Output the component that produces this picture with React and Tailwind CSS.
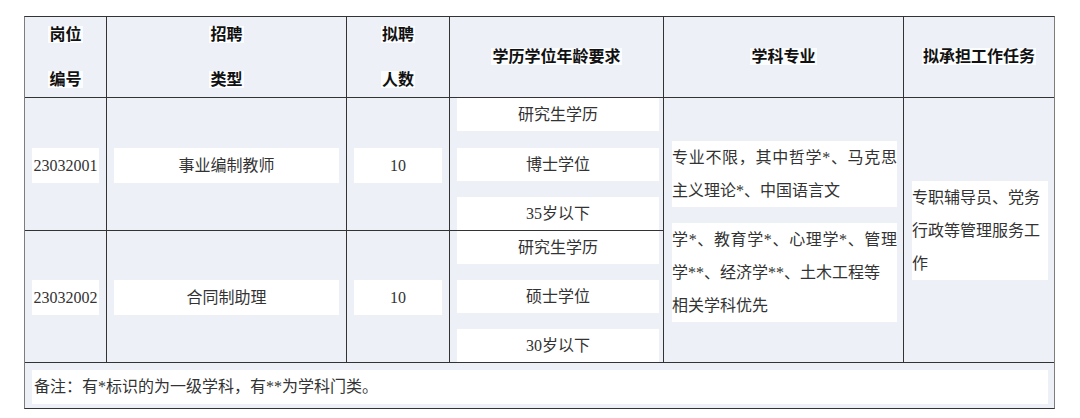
import React from "react";

const cell = "bg-[#edf1f7]";

function HeadCell({ lines }) {
  return (
    <div className={`${cell} flex flex-col items-center justify-center gap-[15px]`}>
      {lines.map((t) => (
        <span key={t} className="leading-[30px] font-bold text-[#111]">
          <span className="bg-[#fbfcfe] px-[1px]">{t}</span>
        </span>
      ))}
    </div>
  );
}

function BoxCell({ text }) {
  return (
    <div className={`${cell} flex items-center px-[7px] pt-[2px]`}>
      <div className="w-full bg-white text-center leading-[35px]">{text}</div>
    </div>
  );
}

function EduCell({ items }) {
  return (
    <div className={`${cell} flex flex-col justify-between pl-[7px] pr-[4px]`}>
      {items.map((t) => (
        <div key={t} className="h-[33px] bg-white text-center leading-[33px]">
          {t}
        </div>
      ))}
    </div>
  );
}

export default function App() {
  return (
    <div className="w-[1080px] h-[418px] bg-white pt-[16px] pl-[24px] font-['Liberation_Serif','Noto_Sans_CJK_SC',serif] text-[16px] text-[#333]">
      <div className="w-[1031px] border border-[#333] border-x-[#7d7d7d]">
        <div className="grid grid-cols-[81px_239px_102px_213px_239px_150px] grid-rows-[80px_132px_131px_45px] gap-px bg-[#333]">
          {/* header */}
          <HeadCell lines={["岗位", "编号"]} />
          <HeadCell lines={["招聘", "类型"]} />
          <HeadCell lines={["拟聘", "人数"]} />
          <HeadCell lines={["学历学位年龄要求"]} />
          <HeadCell lines={["学科专业"]} />
          <HeadCell lines={["拟承担工作任务"]} />

          {/* row 1 */}
          <BoxCell text="23032001" />
          <BoxCell text="事业编制教师" />
          <BoxCell text="10" />
          <EduCell items={["研究生学历", "博士学位", "35岁以下"]} />

          {/* merged: major */}
          <div className={`${cell} row-span-2 flex flex-col justify-center gap-[16px] pl-[8px] pr-[6px] pt-[2px]`}>
            <div className="bg-white leading-[33px]">
              <div className="text-justify [text-align-last:justify]">专业不限，其中哲学*、马克思</div>
              <div>主义理论*、中国语言文</div>
            </div>
            <div className="bg-white leading-[33px]">
              <div className="text-justify [text-align-last:justify]">学*、教育学*、心理学*、管理</div>
              <div>学**、经济学**、土木工程等</div>
              <div>相关学科优先</div>
            </div>
          </div>

          {/* merged: task */}
          <div className={`${cell} row-span-2 flex items-center pl-[8px] pr-[6px]`}>
            <div className="w-full bg-white leading-[33px]">
              专职辅导员、党务行政等管理服务工作
            </div>
          </div>

          {/* row 2 */}
          <BoxCell text="23032002" />
          <BoxCell text="合同制助理" />
          <BoxCell text="10" />
          <EduCell items={["研究生学历", "硕士学位", "30岁以下"]} />

          {/* note */}
          <div className={`${cell} col-span-6 pl-[7px] pr-[6px] pt-[7px] pb-[4px]`}>
            <div className="h-full bg-white pl-[2px] leading-[34px]">
              备注：有*标识的为一级学科，有**为学科门类。
            </div>
          </div>
        </div>
      </div>
    </div>
  );
}
